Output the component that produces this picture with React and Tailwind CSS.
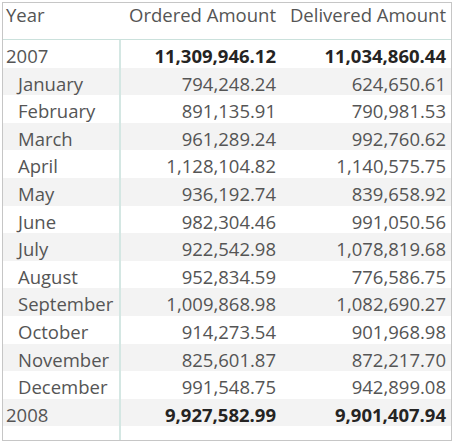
const rows = [
  { label: '2007', a: '11,309,946.12', b: '11,034,860.44', year: true },
  { label: 'January', a: '794,248.24', b: '624,650.61' },
  { label: 'February', a: '891,135.91', b: '790,981.53' },
  { label: 'March', a: '961,289.24', b: '992,760.62' },
  { label: 'April', a: '1,128,104.82', b: '1,140,575.75' },
  { label: 'May', a: '936,192.74', b: '839,658.92' },
  { label: 'June', a: '982,304.46', b: '991,050.56' },
  { label: 'July', a: '922,542.98', b: '1,078,819.68' },
  { label: 'August', a: '952,834.59', b: '776,586.75' },
  { label: 'September', a: '1,009,868.98', b: '1,082,690.27' },
  { label: 'October', a: '914,273.54', b: '901,968.98' },
  { label: 'November', a: '825,601.87', b: '872,217.70' },
  { label: 'December', a: '991,548.75', b: '942,899.08' },
  { label: '2008', a: '9,927,582.99', b: '9,901,407.94', year: true },
]

export default function App() {
  return (
    <div className="w-[455px] h-[447px] bg-white pt-[2px] pl-[2px]" style={{ fontFamily: '"Open Sans", "Noto Sans", sans-serif' }}>
      <div className="w-[450px] h-[439px] border border-[#c6c6c6] text-[18.5px] leading-none text-[#555555] flex flex-col">
        <div className="grid grid-cols-[118px_159px_1fr] h-[37px] border-b border-[#cbe1dc] items-start pt-[3px]">
          <div className="pl-[3px]">Year</div>
          <div className="text-right pr-[4px] whitespace-nowrap">Ordered Amount</div>
          <div className="text-right pr-[5px] whitespace-nowrap">Delivered Amount</div>
        </div>
        {rows.map((r, i) => (
          <div
            key={r.label}
            className={`grid grid-cols-[118px_159px_1fr] h-[27.6px] items-center pt-[5px] ${i % 2 === 1 || i === 13 ? 'bg-[#f3f3f3]' : 'bg-white'}`}
          >
            <div className={`h-[27.6px] -mt-[5px] pt-[5px] flex items-center border-r-2 border-[#d4e7e3] ${r.year ? 'pl-[3px]' : 'pl-[15px]'}`}>
              {r.label}
            </div>
            <div className={`text-right pr-[4px] ${r.year ? 'font-bold text-[#252423]' : ''}`}>{r.a}</div>
            <div className={`text-right pr-[5px] ${r.year ? 'font-bold text-[#252423]' : ''}`}>{r.b}</div>
          </div>
        ))}
        <div className="grid grid-cols-[118px_159px_1fr] flex-1">
          <div className="border-r-2 border-[#d4e7e3]"></div>
        </div>
      </div>
    </div>
  )
}
